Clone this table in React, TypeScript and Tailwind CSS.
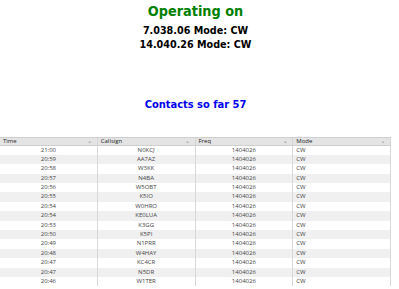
const contacts = [
  { time: '21:00', call: 'N0KCJ' },
  { time: '20:59', call: 'AA7AZ' },
  { time: '20:58', call: 'W3KK' },
  { time: '20:57', call: 'N4BA' },
  { time: '20:56', call: 'W5OBT' },
  { time: '20:55', call: 'K5IO' },
  { time: '20:54', call: 'W0HRO' },
  { time: '20:54', call: 'KE0LUA' },
  { time: '20:53', call: 'K3GG' },
  { time: '20:50', call: 'K5PI' },
  { time: '20:49', call: 'N1PRR' },
  { time: '20:48', call: 'W4HAY' },
  { time: '20:47', call: 'KC4CR' },
  { time: '20:47', call: 'N5DR' },
  { time: '20:46', call: 'W1TER' },
];

const columns = ['Time', 'Callsign', 'Freq', 'Mode'];

function HeaderCell({ label }: { label: string }) {
  return (
    <div className="flex items-center justify-between pl-[3px] pr-[5px] border-r border-[#d4d4d4]">
      <span>{label}</span>
      <span className="text-[4px] text-[#b0b0b0]">▲</span>
    </div>
  );
}

export default function App() {
  return (
    <div className="w-[399px] h-[289px] overflow-hidden bg-white">
      <div className="w-[391px]">
        <div
          className="text-center font-bold pt-[2px]"
          style={{ fontFamily: '"DejaVu Sans Condensed", "DejaVu Sans", sans-serif', fontStretch: 'condensed' }}
        >
          <h1 className="text-[14.3px] leading-[18px] text-[#008000]">Operating on</h1>
          <div className="text-[10.7px] leading-[14.5px] text-black mt-[3.5px]">
            <div>7.038.06 Mode: CW</div>
            <div>14.040.26 Mode: CW</div>
          </div>
          <h2 className="text-[11px] leading-[14px] text-[#0000ee] mt-[45.5px]">Contacts so far 57</h2>
        </div>

        <div
          className="mt-[24.5px] text-[6px] text-[#444]"
          style={{ fontFamily: '"Open Sans", sans-serif' }}
        >
          <div className="grid grid-cols-4 h-[9px] bg-[#e4e4e4] border-y border-[#cfcfcf] text-[#222] leading-[7px]">
            {columns.map((c) => (
              <HeaderCell key={c} label={c} />
            ))}
          </div>
          {contacts.map((r, i) => (
            <div
              key={i}
              className={`grid grid-cols-4 h-[9.4px] leading-[9.4px] ${i % 2 ? 'bg-[#f0f0f0]' : 'bg-white'}`}
            >
              <div className="text-center border-r border-[#d8d8d8]">{r.time}</div>
              <div className="text-center border-r border-[#d8d8d8]">{r.call}</div>
              <div className="text-center border-r border-[#d8d8d8]">1404026</div>
              <div className="px-[3px] border-r border-[#d8d8d8]">CW</div>
            </div>
          ))}
        </div>
      </div>
    </div>
  );
}
